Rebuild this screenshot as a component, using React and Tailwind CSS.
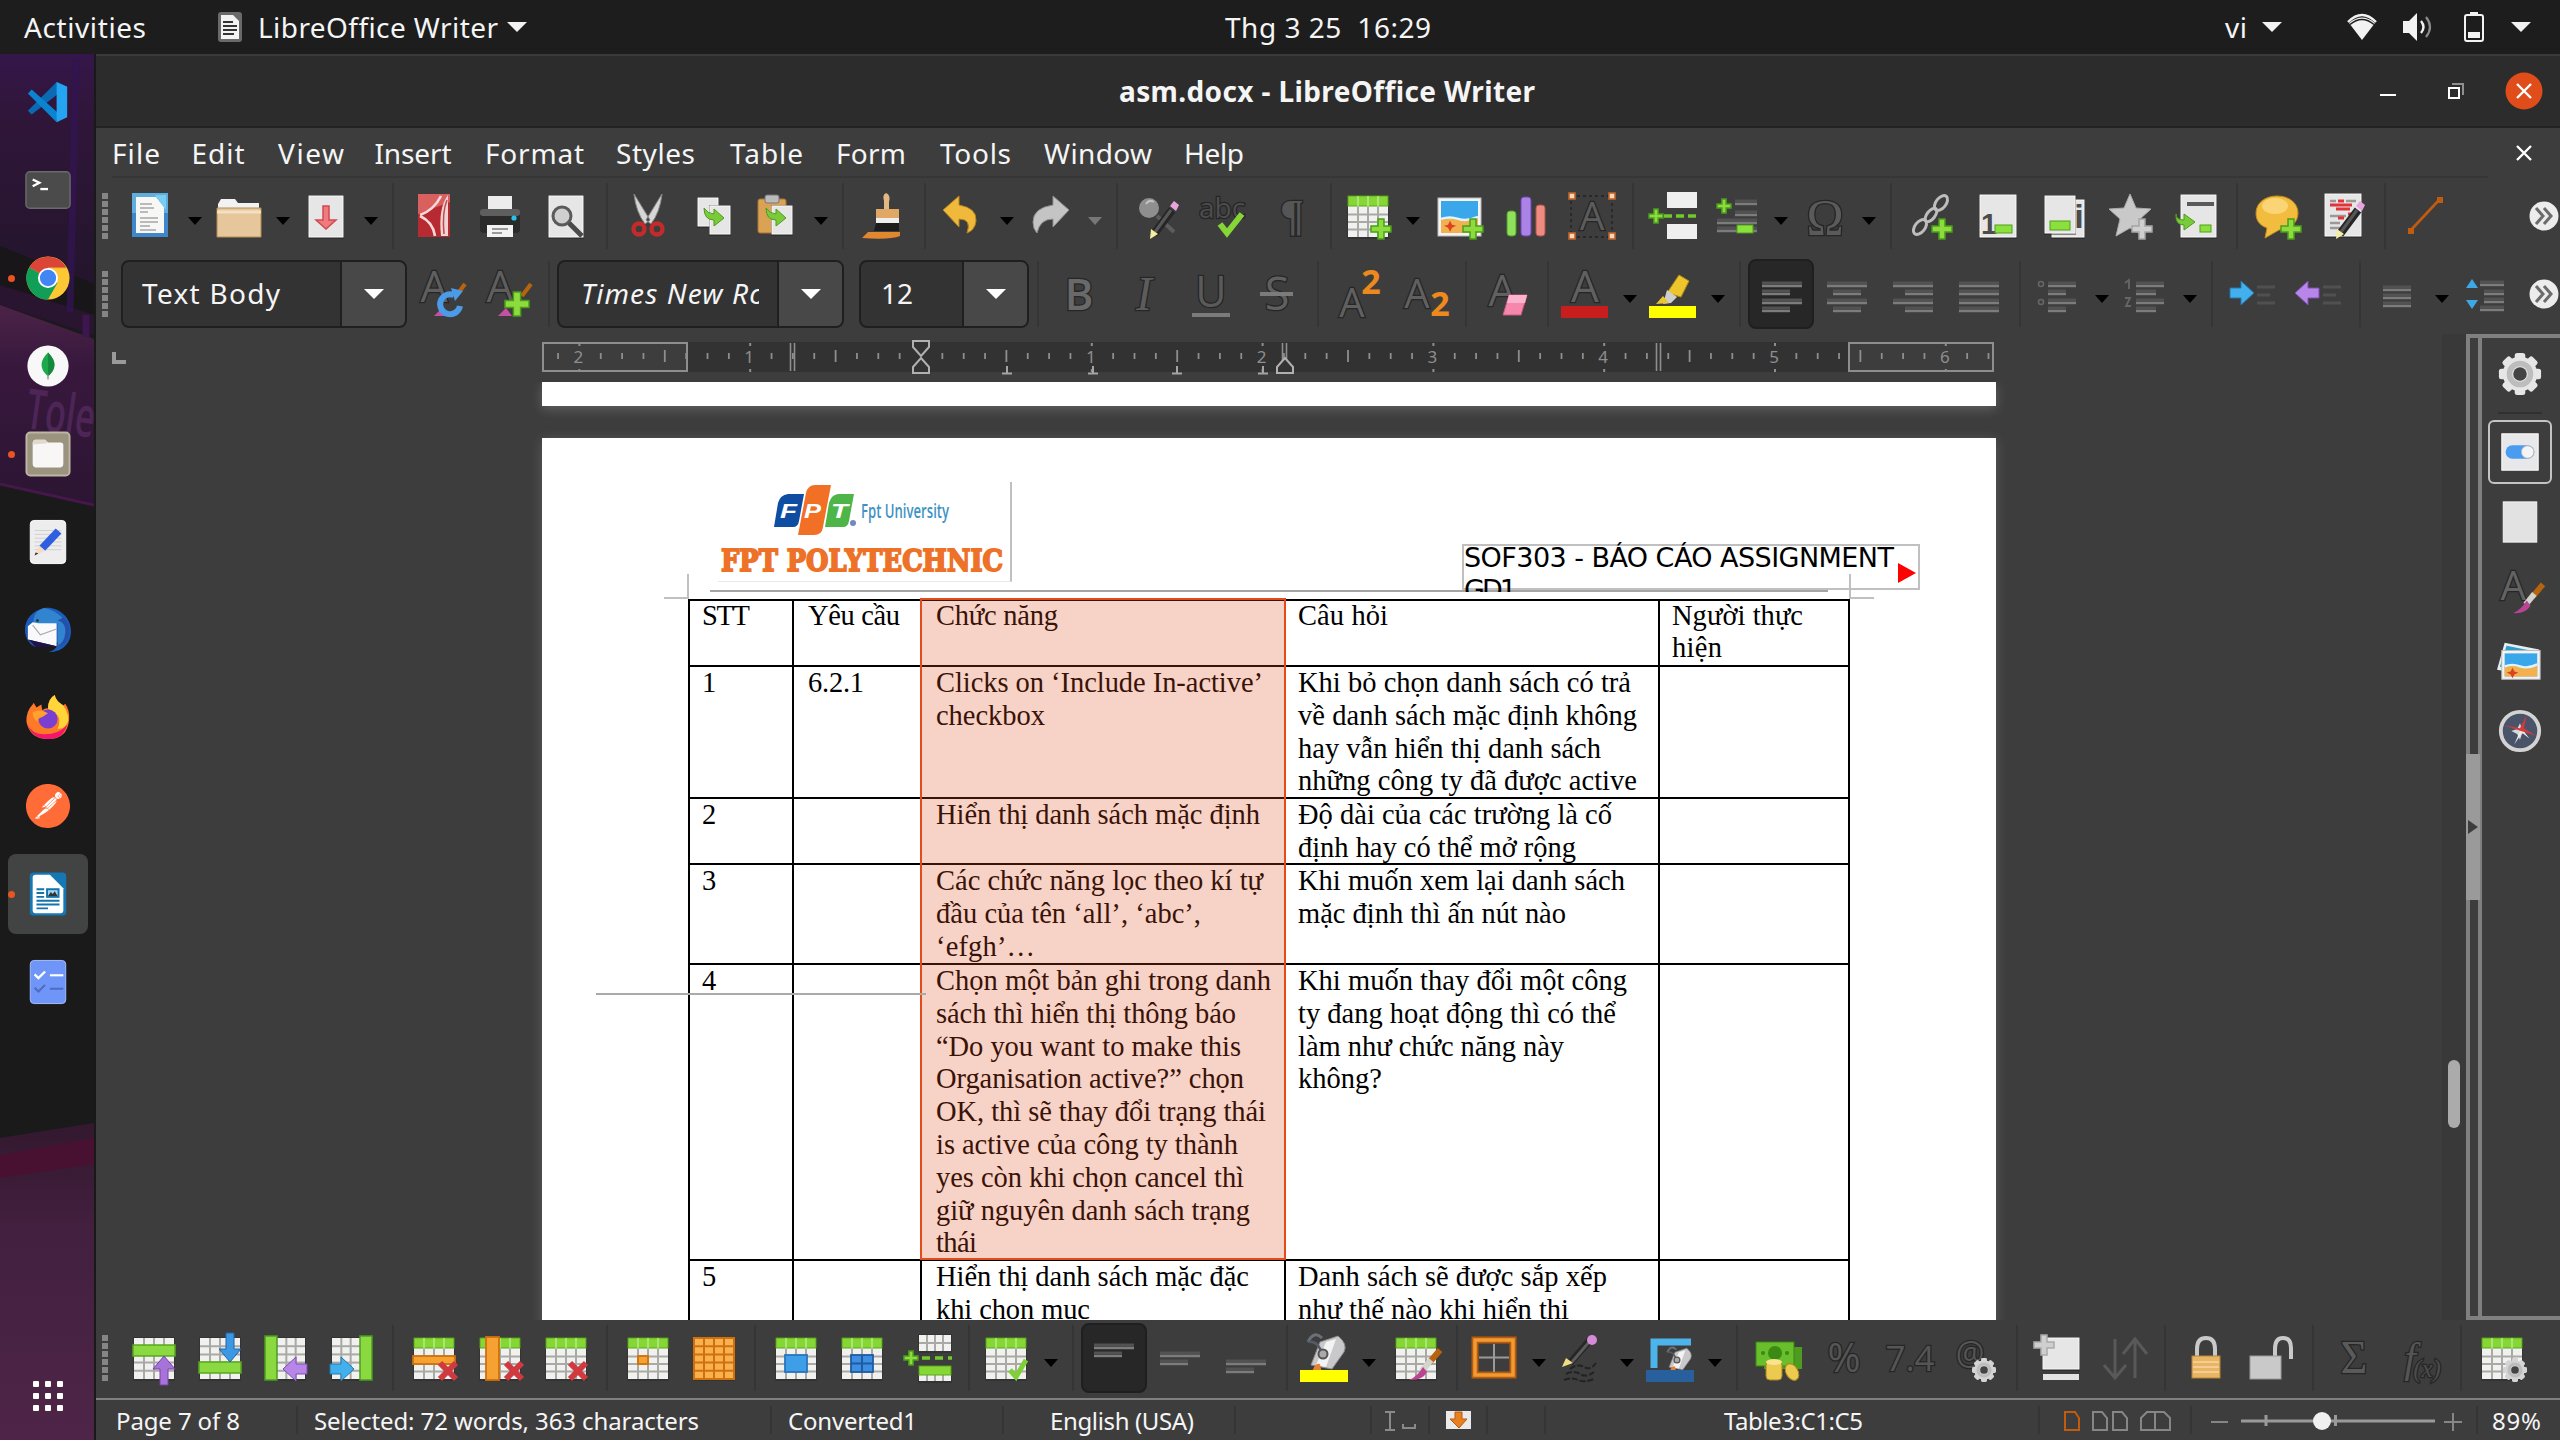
import React, { useLayoutEffect, useRef } from "react";
import { SiPostman } from "react-icons/si";

/* A line of text whose tracking is adjusted so that it spans the given width. */
function Fit({ w, children, className = "" }) {
  const ref = useRef(null);
  useLayoutEffect(() => {
    const el = ref.current;
    const inner = el.firstChild;
    inner.style.letterSpacing = "0px";
    const n = [...children].length;
    const natural = inner.getBoundingClientRect().width;
    if (n > 1) inner.style.letterSpacing = (w - natural) / (n - 1) + "px";
  }, [w, children]);
  return (
    <span ref={ref} className={"block whitespace-pre " + className} style={{ width: w }}>
      <span className="inline-block">{children}</span>
    </span>
  );
}

const Svg = ({ children, size = 48, w, h, vb = "0 0 48 48", className = "" }) => (
  <svg width={w || size} height={h || size} viewBox={vb} className={"block shrink-0 overflow-visible " + className}>
    {children}
  </svg>
);

/* ---------- icon parts ---------- */
const Plus = ({ x, y, s = 10, fill = "#8edb3e", stroke = "#4a9e1a" }) => (
  <path
    d={`M${x - s * 0.3} ${y - s}h${s * 0.6}v${s * 0.7}h${s * 0.7}v${s * 0.6}h${-s * 0.7}v${s * 0.7}h${-s * 0.6}v${-s * 0.7}h${-s * 0.7}v${-s * 0.6}h${s * 0.7}z`}
    fill={fill}
    stroke={stroke}
    strokeWidth="1.5"
  />
);
const Cross = ({ x, y, s = 8 }) => (
  <path d={`M${x - s} ${y - s}L${x + s} ${y + s}M${x + s} ${y - s}L${x - s} ${y + s}`} stroke="#cf3a41" strokeWidth="6" fill="none" />
);
const Grid = ({ x = 4, y = 4, w = 40, h = 41, cols = 4, rows = 5, head = true, fill = "#f1f1ef", line = "#a9a9a6" }) => {
  const top = head ? y + 11 : y;
  const rh = (y + h - top) / (head ? rows - 1 : rows);
  const lines = [];
  for (let i = 1; i < cols; i++) lines.push(<path key={"c" + i} d={`M${x + (w * i) / cols} ${top}V${y + h}`} />);
  for (let i = 1; i < (head ? rows - 1 : rows); i++) lines.push(<path key={"r" + i} d={`M${x} ${top + rh * i}H${x + w}`} />);
  return (
    <g>
      <rect x={x - 1} y={y - 1} width={w + 2} height={h + 3} fill="#2a2a2a" opacity=".5" />
      <rect x={x} y={y} width={w} height={h} fill={fill} />
      <g stroke={line} strokeWidth="2" fill="none">{lines}</g>
      {head && (
        <g>
          <rect x={x} y={y} width={w} height="10" fill="#86d636" stroke="#5aa61c" />
          <path d={`M${x + w / 4} ${y}v10M${x + w / 2} ${y}v10M${x + w * 0.75} ${y}v10`} stroke="#b7ec86" strokeWidth="1.5" />
        </g>
      )}
    </g>
  );
};
const Glyph = ({ t, x = 24, y = 38, size = 38, font = "Open Sans", style, weight = 500, fill = "#666" }) => (
  <text x={x} y={y} fontSize={size} fontFamily={font + ", sans-serif"} fontStyle={style} fontWeight={weight} textAnchor="middle" fill={fill} stroke="#262626" strokeWidth="2.6" paintOrder="stroke">
    {t}
  </text>
);
const Paper = ({ x = 6, y = 3, w = 36, h = 42 }) => (
  <g>
    <rect x={x - 1} y={y - 1} width={w + 2} height={h + 3} fill="#222" opacity=".5" />
    <rect x={x} y={y} width={w} height={h} fill="#e6e6e6" stroke="#f8f8f8" />
  </g>
);
const Lines = ({ rows, c = "#7c7c7c", sw = 3 }) => (
  <g>
    {rows.map(([x1, x2, y], i) => (
      <g key={i}>
        <path d={`M${x1} ${y - 2}H${x2}`} stroke="#525252" strokeWidth={sw} />
        <path d={`M${x1} ${y + 1}H${x2}`} stroke={c} strokeWidth="2.4" />
      </g>
    ))}
  </g>
);
const Pencil = () => (
  <g>
    <path d="M38 18L20 42" stroke="#262626" strokeWidth="8" />
    <path d="M37 18L21 40" stroke="#575757" strokeWidth="3" />
    <path d="M36 14l6 5 3-6-5-4z" fill="#e8a5dd" />
    <path d="M17 37l7 5-8 5z" fill="#f5eea0" />
  </g>
);
const Brush = ({ dx = 0, dy = 0 }) => (
  <g transform={`translate(${dx} ${dy})`}>
    <path d="M47 15L36 28" stroke="#b8640e" strokeWidth="6" />
    <path d="M38 25L29 36" stroke="#d4d4ce" strokeWidth="6" />
    <path d="M30 32l4 5q-5 9-18 8 8-3 14-13z" fill="#b84492" />
  </g>
);
const ArrowV = ({ x, y, up, c, s }) => (
  <path
    transform={`translate(${x} ${y}) scale(1 ${up ? -1 : 1})`}
    d="M-4-15h8V1h7L0 14-11 1h7z"
    fill={c}
    stroke={s}
  />
);
const ArrowH = ({ x, y, left, c, s }) => (
  <path transform={`translate(${x} ${y}) scale(${left ? -1 : 1} 1)`} d="M-12-5h11v-7L12 0-1 12V5h-11z" fill={c} stroke={s} />
);
const Gear = ({ x, y, r, fill = "#dedede" }) => (
  <g transform={`translate(${x} ${y})`}>
    {[0, 45, 90, 135].map((a) => (
      <rect key={a} x={-r * 0.25} y={-r} width={r * 0.5} height={r * 2} rx={r * 0.12} fill={fill} transform={`rotate(${a})`} />
    ))}
    <circle r={r * 0.82} fill={fill} />
    <circle r={r * 0.5} fill="none" stroke="#bdbdbd" strokeWidth={r * 0.26} />
    <circle r={r * 0.32} fill="#444" />
  </g>
);
const Pic = ({ x, y, w, h }) => (
  <g>
    <rect x={x} y={y} width={w} height={h} fill="#f4f4f4" stroke="#bbb" />
    <rect x={x + 3} y={y + 3} width={w - 6} height={h - 6} fill="#3aa7ea" />
    <path d={`M${x + 3} ${y + h * 0.55}q${w * 0.2}-3 ${w * 0.4} 0t${w - 6 - w * 0.4} -2V${y + h - 3}H${x + 3}z`} fill="#f2b04e" />
    <path d={`M${x + 3} ${y + h * 0.55}q${w * 0.2}-3 ${w * 0.4} 0t${w - 6 - w * 0.4} -2`} stroke="#dff4ff" strokeWidth="2.5" fill="none" />
    <path d={`M${x + w * 0.28} ${y + h * 0.6}l2 4 4 1-4 2-2 4-2-4-4-2 4-1z`} fill="#d9431d" />
  </g>
);
const PourCan = ({ dx = 0, dy = 0, k = 1 }) => (
  <g transform={`translate(${dx} ${dy}) scale(${k})`}>
    <path d="M8 8Q14-4 22 4" stroke="#6b6f78" strokeWidth="3" fill="none" />
    <path d="M20 8L38 2Q48 10 44 18L32 35 11 31z" fill="#c9c9cb" stroke="#8a8a8a" />
    <path d="M26 8L36 5 26 33 16 31z" fill="#f3f3f3" />
    <path d="M8 8Q18 6 22 20" stroke="#555b66" strokeWidth="2.5" fill="none" />
    <circle cx="23" cy="20" r="4.5" fill="#aaa" stroke="#555" strokeWidth="2" />
    <path d="M12 38q3-10 8-8 1 6 2 8z" fill="#e88230" />
  </g>
);

/* ---------- toolbar icons ---------- */
const I = {
  newdoc: (
    <>
      <rect x="6" y="1" width="36" height="44" fill="#3f86cb" />
      <rect x="6" y="1" width="36" height="20" fill="#6fbfe6" opacity=".7" />
      <path d="M10 5h20l8 10v26H10z" fill="#f7f7f5" />
      <path d="M29 3h11v15z" fill="#79cdf0" />
      <path d="M14 12h12M14 16h14M14 20h8M14 26h18M14 30h18M14 34h10M14 38h16" stroke="#a7a7a7" strokeWidth="1.6" />
    </>
  ),
  open: (
    <>
      <path d="M4 44V12l3-5h14l3 4h21v33z" fill="#f2f2f2" />
      <path d="M3 16h44v29H3z" fill="#e6c79c" stroke="#b48c55" />
      <path d="M3 20h44" stroke="#f3e0c4" strokeWidth="3" />
    </>
  ),
  save: (
    <>
      <Paper x={7} y={4} w={34} h={41} />
      <path d="M21 14h6v14h7L24 37 14 28h7z" fill="#ef7b7f" stroke="#cf4a50" strokeWidth="1.5" />
    </>
  ),
  pdf: (
    <>
      <rect x="8" y="2" width="32" height="43" fill="#b82a31" />
      <path d="M8 2h32v8L8 22z" fill="#d9605f" />
      <path d="M10 23Q24 18 31 4M10 24Q23 30 25 44" stroke="#f6dada" strokeWidth="2.6" fill="none" />
      <path d="M38 3Q28 16 31 44h7z" fill="#f1d3d3" />
      <path d="M37 8Q32 20 34 42" stroke="#c4484b" strokeWidth="1.500" fill="none" />
    </>
  ),
  print: (
    <>
      <rect x="12" y="4" width="24" height="16" fill="#ececec" />
      <rect x="4" y="17" width="40" height="24" rx="4" fill="#2a2a2a" />
      <rect x="4" y="17" width="40" height="7" rx="3" fill="#5e5e5e" />
      <rect x="11" y="33" width="26" height="12" fill="#f2f2f2" />
      <path d="M16 37h16M16 41h10" stroke="#999" strokeWidth="2" />
      <circle cx="38" cy="26" r="2.6" fill="#27c3ee" />
    </>
  ),
  preview: (
    <>
      <Paper x={7} y={4} w={34} h={41} />
      <circle cx="20" cy="24" r="9" fill="#cfcfcf" stroke="#5b5b5b" strokeWidth="3" />
      <path d="M27 31L40 44" stroke="#4b4b4b" strokeWidth="5" />
    </>
  ),
  cut: (
    <>
      <path d="M10 2l16 26-5 4Q12 20 10 2zM38 2L22 28l5 4Q36 20 38 2z" fill="#d6d6d6" stroke="#888" />
      <circle cx="15" cy="37" r="5.5" fill="none" stroke="#c32b2b" strokeWidth="4.4" />
      <circle cx="33" cy="37" r="5.5" fill="none" stroke="#c32b2b" strokeWidth="4.4" />
    </>
  ),
  copy: (
    <>
      <Paper x={8} y={6} w={20} h={28} />
      <Paper x={20} y={14} w={20} h={28} />
      <path d="M14 16q0 12 10 12v6l10-8-10-9v5q-6 0-10-6z" fill="#79cb3a" stroke="#4f9a1f" />
    </>
  ),
  paste: (
    <>
      <rect x="6" y="7" width="28" height="34" rx="2" fill="#d9a254" stroke="#a97630" />
      <rect x="13" y="3" width="14" height="8" rx="2" fill="#bbb" stroke="#777" />
      <Paper x={20} y={14} w={20} h={28} />
      <path d="M14 16q0 12 10 12v6l10-8-10-9v5q-6 0-10-6z" fill="#79cb3a" stroke="#4f9a1f" />
    </>
  ),
  clone: (
    <>
      <path d="M26 1q5 2 3 9v8h-5V9q-2-6 2-8z" fill="#e2b981" />
      <rect x="16" y="17" width="23" height="10" fill="#dfa865" />
      <rect x="16" y="26" width="23" height="5" fill="#eee" />
      <path d="M16 31h23v8H14z" fill="#1c1c1c" />
      <path d="M2 46l6-6h32v4q-10 4-38 2z" fill="#e18730" />
    </>
  ),
  undo: <path d="M5 18L21 4v9q18 3 17 16-1 9-9 12 5-14-8-14v8z" fill="#f0b93c" stroke="#b5851d" />,
  redo: <path d="M43 18L27 4v9Q7 16 7 30q0 7 4 11 3-14 16-14v8z" fill="#c4c4c4" stroke="#8f8f8f" />,
  find: (
    <>
      <circle cx="15" cy="16" r="10" fill="#8f8f8f" />
      <path d="M12 12q3-5 8-2" stroke="#c0c0c0" strokeWidth="2" fill="none" />
      <path d="M23 24L40 40" stroke="#5d5d5d" strokeWidth="4" />
      <Pencil />
    </>
  ),
  spell: (
    <>
      <Glyph t="abc" x={22} y={26} size={28} fill="#4c4c4c" />
      <path d="M20 32l7 9L42 22" stroke="#86d636" strokeWidth="6" fill="none" />
    </>
  ),
  pilcrow: <Glyph t="¶" x={26} y={38} size={44} fill="#555" font="Liberation Serif" weight="bold" />,
  table: (
    <>
      <Grid />
      <Plus x={37} y={37} />
    </>
  ),
  image: (
    <>
      <Pic x={2} y={6} w={43} h={38} />
      <Plus x={37} y={37} />
    </>
  ),
  chart: (
    <>
      <rect x="5" y="19" width="9" height="25" rx="3" fill="#8fe05a" stroke="#519b28" />
      <rect x="19" y="5" width="10" height="39" rx="3" fill="#ab83e6" stroke="#6f47b5" />
      <rect x="34" y="13" width="9" height="31" rx="3" fill="#ee8b80" stroke="#b2524a" />
    </>
  ),
  textbox: (
    <>
      <rect x="3" y="4" width="41" height="41" fill="none" stroke="#222" strokeWidth="1.4" strokeDasharray="3 3" />
      {[[1, 1], [41, 1], [1, 41], [41, 41]].map(([x, y]) => (
        <rect key={x + "-" + y} x={x} y={y} width="6" height="6" fill="#f8d9c0" stroke="#c4622a" strokeWidth="1.6" />
      ))}
      <Glyph t="A" x={24} y={38} size={39} fill="#5c5c5c" />
    </>
  ),
  pagebreak: (
    <>
      <rect x="17" y="0" width="30" height="16" fill="#efefef" />
      <rect x="17" y="32" width="30" height="15" fill="#efefef" />
      <Plus x={6} y={24} s={7} />
      <path d="M14 24h34" stroke="#72c92c" strokeWidth="3.4" strokeDasharray="8 4" />
    </>
  ),
  field: (
    <>
      <Plus x={12} y={14} s={7} />
      <Lines rows={[[23, 45, 11], [23, 45, 22], [5, 45, 30], [5, 45, 38]]} />
      <rect x="25" y="33" width="16" height="8" fill="#8be03e" stroke="#4e9f1b" />
    </>
  ),
  omega: <Glyph t="Ω" x={25} y={42} size={50} fill="#5a5a5a" font="Liberation Serif" />,
  link: (
    <>
      <g fill="none" stroke="#bdbdbd" strokeWidth="3">
        <ellipse cx="33" cy="11" rx="5" ry="8.5" transform="rotate(38 33 11)" />
        <ellipse cx="23" cy="23" rx="4" ry="8" transform="rotate(38 23 23)" />
        <ellipse cx="12" cy="35" rx="5" ry="8.5" transform="rotate(38 12 35)" />
      </g>
      <Plus x={34} y={37} />
    </>
  ),
  footnote: (
    <>
      <Paper />
      <text x="15" y="42" fontSize="29" fontWeight="bold" fontFamily="Liberation Sans, sans-serif" textAnchor="middle" fill="#4c4c4c">1</text>
      <rect x="21" y="33" width="17" height="8" fill="#8be03e" stroke="#4e9f1b" />
    </>
  ),
  endnote: (
    <>
      <Paper x={12} y={8} w={32} h={37} />
      <Paper x={5} y={4} w={30} h={37} />
      <text x="39" y="36" fontSize="34" fontWeight="bold" fontFamily="Liberation Sans, sans-serif" textAnchor="middle" fill="#4c4c4c">i</text>
      <rect x="10" y="29" width="20" height="9" fill="#8be03e" stroke="#4e9f1b" />
    </>
  ),
  bookmark: (
    <>
      <path d="M24 2l6 14 15 1-11 10 4 17-14-8-14 8 4-17L3 17l15-1z" fill="#c9c9c9" stroke="#ababab" />
      <Plus x={36} y={37} fill="#cfcfcf" stroke="#a5a5a5" />
    </>
  ),
  crossref: (
    <>
      <Paper x={9} y={3} w={35} h={42} />
      <path d="M15 12h27" stroke="#5a5a5a" strokeWidth="4" />
      <path d="M4 22q0 6 8 6v-6l11 8-11 8v-5Q3 33 4 22z" fill="#79cb3a" stroke="#4f9a1f" />
      <rect x="28" y="33" width="11" height="7" fill="#8be03e" stroke="#4e9f1b" />
    </>
  ),
  comment: (
    <>
      <path d="M23 4c12 0 21 7 21 17s-8 16-19 17L11 46l2-10C5 33 2 28 2 21 2 11 11 4 23 4z" fill="#f2bd3f" stroke="#c48b1b" />
      <ellipse cx="21" cy="14" rx="13" ry="8" fill="#ffe08d" opacity=".7" />
      <Plus x={37} y={37} />
    </>
  ),
  track: (
    <>
      <Paper x={5} y={2} />
      <path d="M10 9h6M26 9h10M10 24h16M10 31h10M10 36h10" stroke="#999" strokeWidth="2.4" />
      <path d="M18 9h6M10 13h22M16 17h14M28 22h6M18 26h6" stroke="#e0343a" strokeWidth="3" />
      <Pencil />
    </>
  ),
  line: (
    <>
      <path d="M9 38L37 8" stroke="#c15b10" strokeWidth="2.6" />
      <rect x="6" y="36" width="6" height="6" fill="#c15b10" />
      <rect x="35" y="5" width="6" height="6" fill="#c15b10" />
    </>
  ),
  /* formatting */
  updStyle: (
    <>
      <Glyph t="A" x={16} y={32} size={43} fill="#5e5e5e" />
      <path d="M47 14L38 26" stroke="#b8640e" strokeWidth="4" />
      <path d="M16 46l8-8 4 8z" fill="#c651a4" />
      <path d="M42 36a10 10 0 1 1-6-11" fill="none" stroke="#4c9be8" strokeWidth="6" />
      <path d="M33 18l12 3-8 10z" fill="#4c9be8" />
    </>
  ),
  newStyle: (
    <>
      <Glyph t="A" x={16} y={32} size={43} fill="#5e5e5e" />
      <path d="M47 14L38 26" stroke="#b8640e" strokeWidth="4" />
      <path d="M14 46l8-8 6 8z" fill="#c651a4" />
      <Plus x={33} y={34} s={12} />
    </>
  ),
  bold: <Glyph t="B" x={24} y={40} size={44} fill="#696969" weight="600" />,
  italic: <Glyph t="I" x={23} y={40} size={48} fill="#5c5c5c" font="Liberation Serif" style="italic" />,
  underline: (
    <>
      <Glyph t="U" x={24} y={37} size={43} fill="#5a5a5a" />
      <path d="M5 45h38" stroke="#7b7b7b" strokeWidth="4" />
    </>
  ),
  strike: (
    <>
      <Glyph t="S" x={24} y={40} size={45} fill="#606060" />
      <path d="M7 24h33" stroke="#7b7b7b" strokeWidth="4" />
    </>
  ),
  sup: (
    <>
      <Glyph t="A" x={17} y={47} size={40} fill="#606060" />
      <text x="36" y="24" fontSize="34" fontWeight="bold" fontFamily="Open Sans, sans-serif" textAnchor="middle" fill="#ee8a1d">2</text>
    </>
  ),
  sub: (
    <>
      <Glyph t="A" x={16} y={38} size={40} fill="#606060" />
      <text x="39" y="46" fontSize="34" fontWeight="bold" fontFamily="Open Sans, sans-serif" textAnchor="middle" fill="#ee8a1d">2</text>
    </>
  ),
  clear: (
    <>
      <Glyph t="A" x={19} y={36} size={43} fill="#606060" />
      <path d="M26 25h18l-6 20H20z" fill="#f587ad" stroke="#c75a80" />
      <path d="M26 25h18l-2 8H24z" fill="#fbb2cc" />
    </>
  ),
  fontColor: (
    <>
      <Glyph t="A" x={24} y={32} size={44} fill="#606060" />
      <rect x="0" y="36" width="47" height="12" fill="#c81d1d" />
    </>
  ),
  highlight: (
    <>
      <path d="M30 5l10 6-8 16-14-4z" fill="#edc52d" stroke="#b28a10" />
      <path d="M18 20l10 7-6 6-8 1z" fill="#cfcfcf" />
      <path d="M7 34l7-8 6 7z" fill="#edc52d" />
      <rect x="0" y="36" width="47" height="12" fill="#ffff00" />
    </>
  ),
  alL: <Lines rows={[[5, 45, 15], [5, 33, 23], [5, 45, 32], [5, 33, 40]]} />,
  alC: <Lines rows={[[4, 44, 15], [10, 38, 23], [4, 44, 32], [10, 38, 40]]} />,
  alR: <Lines rows={[[4, 44, 15], [16, 44, 23], [4, 44, 32], [16, 44, 40]]} />,
  alJ: <Lines rows={[[4, 44, 15], [4, 44, 23], [4, 44, 32], [4, 44, 40]]} />,
  bullets: (
    <>
      <Lines rows={[[15, 43, 15], [15, 33, 23], [15, 43, 32], [15, 33, 40]]} />
      <circle cx="8" cy="14" r="2.5" fill="none" stroke="#666" strokeWidth="1.6" />
      <circle cx="8" cy="32" r="2.5" fill="none" stroke="#666" strokeWidth="1.6" />
    </>
  ),
  numbers: (
    <>
      <Lines rows={[[15, 43, 15], [15, 35, 23], [15, 43, 32], [15, 35, 40]]} />
      <path d="M4 13l4-3v9M4 28h5l-4 8h5" fill="none" stroke="#666" strokeWidth="1.8" />
    </>
  ),
  indent: (
    <>
      <ArrowH x={13} y={23} c="#43b0ee" s="#2277ad" />
      <path d="M28 17h18M28 25h13M28 33h18" stroke="#505050" strokeWidth="3" />
    </>
  ),
  outdent: (
    <>
      <ArrowH x={12} y={23} left c="#b786e8" s="#7e4fb5" />
      <path d="M28 17h18M28 25h13M28 33h18" stroke="#505050" strokeWidth="3" />
    </>
  ),
  lineSp: <Lines rows={[[10, 38, 19], [10, 38, 27], [10, 38, 35]]} />,
  paraSp: (
    <>
      <path d="M1 18l6-9 6 9zM1 30l6 9 6-9z" fill="#3ea8e6" />
      <Lines rows={[[15, 39, 14], [19, 39, 23], [19, 39, 31], [15, 39, 39]]} />
    </>
  ),
  /* table toolbar */
  rowAbove: (<><Grid head={false} /><rect x="3" y="11" width="42" height="11" fill="#8bd940" stroke="#5aa61c" strokeWidth="1.5" /><ArrowV x={34} y={36} up c="#a873d8" s="#7642ad" /></>),
  rowBelow: (<><Grid head={false} /><rect x="3" y="28" width="42" height="11" fill="#8bd940" stroke="#5aa61c" strokeWidth="1.5" /><ArrowV x={34} y={14} c="#3d98e3" s="#2164a8" /></>),
  colBefore: (<><Grid head={false} x={15} w={28} cols={3} /><rect x="3" y="2" width="12" height="44" fill="#8bd940" stroke="#4f9a1f" strokeWidth="1.5" /><ArrowH x={33} y={35} left c="#b786e8" s="#7e4fb5" /></>),
  colAfter: (<><Grid head={false} x={4} w={28} cols={3} /><rect x="32" y="2" width="12" height="44" fill="#8bd940" stroke="#4f9a1f" strokeWidth="1.5" /><ArrowH x={14} y={35} c="#43b0ee" s="#2277ad" /></>),
  delRow: (<><Grid /><rect x="3" y="22" width="42" height="8" fill="#f5a233" stroke="#d0700c" strokeWidth="1.8" /><Cross x={38} y={37} /></>),
  delCol: (<><Grid /><rect x="10" y="3" width="13" height="43" fill="#f5a233" stroke="#d0700c" strokeWidth="1.8" /><Cross x={38} y={37} /></>),
  delTab: (<><Grid /><Cross x={36} y={37} /></>),
  selCell: (<><Grid /><rect x="14" y="22" width="10" height="8" fill="#f5a233" stroke="#d0700c" strokeWidth="1.8" /></>),
  selTab: (<><Grid head={false} fill="#f9b14f" line="#d0700c" /><rect x="4" y="4" width="40" height="41" fill="none" stroke="#d0700c" strokeWidth="2" /></>),
  merge: (<><Grid /><rect x="13" y="21" width="22" height="17" fill="#3f9ee8" stroke="#2a74bd" strokeWidth="1.8" /></>),
  split: (<><Grid /><rect x="13" y="21" width="22" height="17" fill="#3f8fe0" stroke="#1d5ba3" strokeWidth="1.8" /><path d="M24 21v17M13 29.500h22" stroke="#1d5ba3" strokeWidth="2" /></>),
  splitTab: (
    <>
      <Grid head={false} x={15} y={1} w={32} h={16} cols={4} rows={2} />
      <Grid head={false} x={15} y={32} w={32} h={15} cols={4} rows={2} />
      <rect x="15" y="32" width="32" height="9" fill="#86d636" stroke="#5aa61c" />
      <Plus x={7} y={24} s={7} />
      <path d="M18 24h30" stroke="#72c92c" strokeWidth="3.4" strokeDasharray="8 5" />
    </>
  ),
  autofit: (<><Grid /><path d="M28 36l6 7L44 26" stroke="#7fd036" strokeWidth="5" fill="none" /></>),
  vTop: <Lines rows={[[4, 44, 13], [4, 32, 21]]} />,
  vMid: <Lines rows={[[4, 44, 21], [4, 32, 29]]} />,
  vBot: <Lines rows={[[4, 44, 29], [4, 32, 37]]} />,
  cellBg: (<><PourCan /><rect x="0" y="36" width="48" height="12" fill="#ffff00" /></>),
  tabStyle: (<><Grid /><Brush dx={1} dy={1} /></>),
  borders: (<><rect x="5" y="6" width="38" height="35" fill="none" stroke="#b95b0c" strokeWidth="7" /><rect x="5" y="6" width="38" height="35" fill="none" stroke="#f09a33" strokeWidth="3.5" /><path d="M24 10v28M9 23.500h30" stroke="#9a9a9a" strokeWidth="2" /></>),
  bStyle: (<><path d="M33 5L12 29" stroke="#262626" strokeWidth="7" /><path d="M32 7L14 28" stroke="#5b5b5b" strokeWidth="3" /><circle cx="34" cy="6" r="5" fill="#d68bd6" /><path d="M4 33l4-9 7 5z" fill="#f0df80" /><path d="M12 35q8-6 14-2t12-4M8 40q8-4 14 0t14-2M6 46q8-3 14 0t16-1" stroke="#222" strokeWidth="2" fill="none" strokeDasharray="6 2" /></>),
  bColor: (<><path d="M8 34V8h37" fill="none" stroke="#4cb4ea" strokeWidth="7" /><PourCan dx={16} dy={13} k={0.65} /><rect x="0" y="36" width="48" height="12" fill="#285f9d" /></>),
  currency: (
    <>
      <rect x="10" y="13" width="38" height="22" fill="#4d9c20" />
      <rect x="2" y="8" width="38" height="24" fill="#69bf2b" stroke="#3d8514" />
      <circle cx="21" cy="19" r="7" fill="#3b8a14" />
      <circle cx="9" cy="19" r="2" fill="#3b8a14" /><circle cx="33" cy="19" r="2" fill="#3b8a14" />
      <rect x="12" y="27" width="16" height="19" rx="4" fill="#ecc94f" stroke="#a88620" />
      <ellipse cx="20" cy="28" rx="8" ry="3" fill="#f8e48d" />
      <ellipse cx="38" cy="38" rx="6" ry="9" fill="#ecc94f" stroke="#a88620" transform="rotate(-30 38 38)" />
    </>
  ),
  percent: <Glyph t="%" x={24} y={38} size={40} fill="#555" />,
  decimal: <Glyph t="7.4" x={24} y={37} size={35} fill="#555" />,
  numfmt: (<><Glyph t="@" x={18} y={31} size={32} fill="#555" /><Gear x={32} y={36} r={12} fill="#d4d4d4" /></>),
  caption: (<><Paper x={9} y={4} w={36} h={31} /><rect x="9" y="40" width="36" height="6" fill="#e3e3e3" /><Plus x={10} y={11} s={10} fill="#cfcfcf" stroke="#aaa" /></>),
  sort: <path d="M15 5v38M4 31l11 13 11-13M35 44V6M23 20L35 5l12 15" fill="none" stroke="#595959" strokeWidth="3" />,
  lock: (<><path d="M15 24V15q0-11 9-11t9 11v9" fill="none" stroke="#c9c9c9" strokeWidth="4" /><rect x="10" y="22" width="28" height="22" fill="#e8b565" stroke="#b98435" /><path d="M11 28h26M11 33h26M11 38h26" stroke="#f3cd92" strokeWidth="2" /></>),
  unlock: (<><path d="M27 24V15q0-11 8-11t8 10v11" fill="none" stroke="#c9c9c9" strokeWidth="4" /><rect x="2" y="22" width="31" height="23" fill="#c9c9c9" stroke="#9b9b9b" /></>),
  sum: <Glyph t="Σ" x={24} y={39} size={46} fill="#5a5a5a" font="Liberation Serif" />,
  fx: (<><Glyph t="f" x={14} y={38} size={42} fill="#555" font="Liberation Serif" style="italic" /><Glyph t="(x)" x={31} y={43} size={25} fill="#4c4c4c" font="Liberation Serif" style="italic" /></>),
  props: (<><Grid /><Gear x={37} y={36} r={12} fill="#d4d4d4" /></>),
};

/* ---------- toolbar building blocks ---------- */
const Caret = ({ c = "#000" }) => (
  <svg width="14" height="8" viewBox="0 0 14 8" className="block"><path d="M0 0h14L7 8z" fill={c} /></svg>
);
const Btn = ({ i, on }) => (
  <div className={"flex w-[66px] shrink-0 items-center justify-center " + (on ? "h-[70px] rounded-lg border-2 border-[#1f1f1f] bg-[#272727]" : "")}>
    <Svg>{I[i]}</Svg>
  </div>
);
const Drop = ({ i, dim }) => (
  <div className="flex w-[88px] shrink-0 items-center pl-[5px]">
    <Svg>{I[i]}</Svg>
    <div className="ml-[14px] mt-[9px]"><Caret c={dim ? "#777" : "#000"} /></div>
  </div>
);
const Sep = () => <div className="mx-[7px] h-[66px] w-[2px] shrink-0 bg-[#353535]" />;
const Grip = () => (
  <div className="ml-[6px] mr-[13px] flex w-[6px] shrink-0 flex-col gap-[2px]">
    {[0, 1, 2, 3, 4, 5].map((k) => <div key={k} className="size-[6px] bg-[#858585]" />)}
  </div>
);
const More = () => (
  <Svg size={32} vb="0 0 32 32" className="absolute right-[1px]">
    <circle cx="17" cy="16" r="14.500" fill="#ececec" />
    <path d="M9 8l7 8-7 8M17 8l7 8-7 8" fill="none" stroke="#6b6b6b" strokeWidth="3" />
  </Svg>
);
/* Items: plain name = button, trailing "+" = split button, "-" = disabled split, "|" = separator, leading "*" = pressed. */
const Bar = ({ items }) =>
  items.split(" ").map((t, k) => {
    if (t === "|") return <Sep key={k} />;
    if (t.endsWith("+")) return <Drop key={k} i={t.slice(0, -1)} />;
    if (t.endsWith("-")) return <Drop key={k} i={t.slice(0, -1)} dim />;
    if (t.startsWith("*")) return <Btn key={k} i={t.slice(1)} on />;
    return <Btn key={k} i={t} />;
  });
const Combo = ({ text, tw, w, left, italic, clip }) => (
  <div className="flex h-[68px] shrink-0 overflow-hidden rounded-lg border-2 border-[#1f1f1f] bg-[#333]" style={{ width: w }}>
    <div className="flex grow items-center border-r-2 border-[#1f1f1f]" style={{ paddingLeft: left }}>
      <div className={"pb-[3px] leading-[44px] " + (italic ? "overflow-hidden italic" : "")} style={{ width: clip || "auto" }}>
        <Fit w={tw}>{text}</Fit>
      </div>
    </div>
    <div className="flex w-[63px] shrink-0 items-center justify-center bg-[#484848]">
      <svg width="20" height="10" viewBox="0 0 20 10"><path d="M0 0h20L10 10z" fill="#fff" /></svg>
    </div>
  </div>
);

/* ---------- dock ---------- */
const dock = [
  { k: "vscode", el: (<><path d="M3 33l4 4L44 8 33 3z" fill="#0a6ab3" /><path d="M3 15l4-4 27 24-1 10z" fill="#0a84d0" /><path d="M33 3l11 5v32l-11 5z" fill="#25a4f1" /></>) },
  { k: "terminal", el: (<><rect x="1" y="5" width="46" height="38" rx="4" fill="#4b4b4b" stroke="#6a6a6a" strokeWidth="1.5" /><path d="M8 13l7 3.500-7 3.500" fill="none" stroke="#fff" strokeWidth="2.4" /><path d="M16 23h8" stroke="#fff" strokeWidth="2.4" /></>) },
  { k: "chrome", dot: true, el: (<><circle cx="24" cy="24" r="22.500" fill="#fcc934" /><path d="M24 24L4.500 12.700A22.500 22.500 0 0 0 24 46.500L34 29z" fill="#119f58" /><path d="M24 24L4.500 12.700A22.500 22.500 0 0 1 43.500 13.500H24z" fill="#db4437" /><path d="M24 13.500h19.500" stroke="#e2b52c" /><circle cx="24" cy="24" r="10.500" fill="#fff" /><circle cx="24" cy="24" r="8.500" fill="#4285f4" /></>) },
  { k: "mongo", el: (<><circle cx="24" cy="24" r="21.500" fill="#f8f8f8" /><path d="M24 10c9 9 9 17 0 25-9-8-9-16 0-25z" fill="#1ba94c" /><path d="M24 10c9 9 9 17 0 25z" fill="#158a3e" /><path d="M24 33v5" stroke="#999" strokeWidth="1.5" /></>) },
  { k: "files", dot: true, el: (<><rect x="1.500" y="1.500" width="45" height="45" rx="4" fill="#9b937e" stroke="#bdb6a4" strokeWidth="2" /><path d="M8 13q0-4 3-4h10l3 3h13q3 0 3 3v19q0 4-3 4H11q-3 0-3-4z" fill="#f8f7f6" /><path d="M8 14q0-5 3-5h10l3 3-3 1z" fill="#e0dace" /></>) },
  { k: "editor", el: (<><rect x="5.500" y="1.500" width="37" height="45" rx="4" fill="#ededed" stroke="#fff" /><path d="M10 12h28M10 16h28M10 20h28M10 24h28M10 28h28M10 32h28" stroke="#cfcfcf" strokeWidth="1" /><path d="M15 28L32 10l6 5-17 18z" fill="#2f5fe0" /><path d="M15 28l6 5-11 5z" fill="#f5dcc3" /><path d="M10 38l1-3 3 1z" fill="#333" /></>) },
  { k: "thunderbird", el: (<><path d="M20 1C34-1 48 10 48 25c0 12-8 22-23 22 6-2 9-5 9-10L6 28C4 34 8 40 12 42 3 39 0 30 0 24 0 12 8 4 20 1z" fill="#1c5dbb" /><path d="M20 1c9 2 20 7 26 20-2 9-4 14-12 19V17L9 18C8 9 12 3 20 1z" fill="#3084d0" /><path d="M34 14c10 2 11 15 2 28 12-6 14-22 4-31z" fill="#254fa8" /><path d="M3 20l5-4 6 1 19 0v24L3 34z" fill="#f9f9fb" /><path d="M8 19l8 10 17-6" fill="none" stroke="#aaa" strokeWidth="1.2" /><path d="M3 34l30 7-20 1z" fill="#20114f" /><circle cx="13" cy="14" r="1.300" fill="#222" /></>) },
  { k: "firefox", el: (<><path d="M9 8l3 5 5-3 1 6q4-3 6-2 0-10 7-14 1 6 9 11l2-2q5 7 4 17Q44 46 24 46 5 46 1.500 28 1 17 8 10z" fill="#ff7a26" /><path d="M31 0q1 6 9 11 6 9 5 16-3 9-11 8 4-8 0-14-5-5-10-7 0-10 7-14z" fill="#ffd53a" /><path d="M2 30q5 11 18 11 16 0 24-10-4 15-20 15T2 30z" fill="#f5156c" /><circle cx="24" cy="25" r="10" fill="#7a3fd0" /><path d="M8 18q8-4 16 1l-6 4q-5 1-5 5-5-4-5-10z" fill="#ffa22e" /></>) },
  { k: "postman", el: (<><circle cx="24" cy="24" r="21" fill="#fff" /><g transform="translate(1 1)"><SiPostman size={46} color="#ff6c37" /></g></>) },
  { k: "writer", dot: true, on: true, el: (<><rect x="5" y="1.500" width="38" height="45" rx="4" fill="#1578b4" /><path d="M8 7q0-3 3-3h15l14 14v23q0 3-3 3H11q-3 0-3-3z" fill="#fff" /><path d="M12 19h8M12 23h8M12 27h8M12 31h24M12 35h24M12 39h12" stroke="#1273ad" strokeWidth="2" /><rect x="22" y="18" width="14" height="10" fill="#1273ad" /><rect x="24" y="20" width="10" height="6" fill="#9fd3f3" /><path d="M24 26l3-4 2 2 2-3 3 5z" fill="#333" /></>) },
  { k: "todo", el: (<><rect x="5.500" y="1.500" width="37" height="45" rx="4" fill="#6f95f8" stroke="#a8c0ff" /><path d="M10 16l4 4 7-7" fill="none" stroke="#fff" strokeWidth="2.400" /><path d="M26 17h14" stroke="#fff" strokeWidth="2.200" /><path d="M10 30l4 4 7-7M26 31h14" fill="none" stroke="#4e6cc0" strokeWidth="2.200" /></>) },
];

function Dock() {
  return (
    <div className="relative w-[96px] shrink-0 overflow-hidden border-r-2 border-[#191919] bg-[#1a1a1a]">
      <svg className="absolute inset-0" width="94" height="1386" viewBox="0 54 94 1386">
        <defs>
          <linearGradient id="wa" x1="0" y1="0" x2="0" y2="1">
            <stop offset="0" stopColor="#35164a" /><stop offset=".25" stopColor="#30163a" /><stop offset="1" stopColor="#23152c" />
          </linearGradient>
          <linearGradient id="wb" x1="0" y1="0" x2="0" y2="1">
            <stop offset="0" stopColor="#4c2348" /><stop offset=".3" stopColor="#38183d" /><stop offset="1" stopColor="#2c1533" />
          </linearGradient>
          <linearGradient id="wc" x1="0" y1="0" x2="0" y2="1">
            <stop offset="0" stopColor="#33182f" /><stop offset=".35" stopColor="#43203f" /><stop offset="1" stopColor="#4e2548" />
          </linearGradient>
        </defs>
        <path d="M0 54h94v230L0 246z" fill="url(#wa)" />
        <path d="M0 246l94 38v30L0 286z" fill="#181619" />
        <path d="M0 285l94 30v20L0 305z" fill="#29152f" />
        <path d="M0 305l94 34v166L0 483z" fill="url(#wb)" />
        <path d="M0 484l94 21" stroke="#45174a" strokeWidth="3" />
        <path d="M76 58L70 312" stroke="#321450" strokeWidth="7" opacity=".8" />
        <path d="M86 315v22" stroke="#3d164e" strokeWidth="7" />
        <text x="24" y="428" fontSize="56" fontWeight="600" fontFamily="Open Sans, sans-serif" fill="#4d2556" textLength="69" lengthAdjust="spacingAndGlyphs" transform="rotate(8 24 428)">Tole</text>
        <path d="M0 1138l94-15v317H0z" fill="url(#wc)" />
        <path d="M0 1155l94-17v26L0 1178z" fill="#481132" />
      </svg>
      <div className="relative flex h-full flex-col items-center pt-[8px]">
        {dock.map((d) => (
          <div key={d.k} className="relative mb-[8px] flex h-[80px] w-[94px] shrink-0 items-center justify-center">
            {d.on && <div className="absolute left-[8px] h-[80px] w-[80px] rounded-lg bg-[#424343]" />}
            {d.dot && <div className="absolute left-[8px] size-[7px] rounded-full bg-[#e95420]" />}
            <Svg size={46} className="relative ml-[2px]">{d.el}</Svg>
          </div>
        ))}
        <div className="mb-[29px] ml-[2px] mt-auto grid grid-cols-3 gap-[6px]">
          {[...Array(9)].map((_, k) => <div key={k} className="size-[6px] rounded-[1px] bg-white" />)}
        </div>
      </div>
    </div>
  );
}

/* ---------- ruler ---------- */
function Ruler() {
  const zero = 379, inch = 170.8;
  const marks = [];
  for (let e = -17; e <= 50; e++) {
    const x = zero + (e * inch) / 8;
    if (x < 4 || x > 1450 || e === 0) continue;
    if (e % 8 === 0) {
      marks.push(
        <g key={e}>
          <path d={`M${x} 1v3M${x} 27v3`} stroke="#8e8e8e" strokeWidth="2" />
          <text x={x - 1} y="21" fontSize="17" textAnchor="middle" fill="#8e8e8e" fontFamily="Noto Sans, sans-serif">{Math.abs(e / 8)}</text>
        </g>
      );
    } else {
      const t = e % 4 === 0 ? 6 : 3;
      marks.push(<path key={e} d={`M${x} ${14 - t}v${2 * t}`} stroke="#8e8e8e" strokeWidth="1.800" />);
    }
  }
  return (
    <svg width="1454" height="40" viewBox="0 -3 1454 40" className="mt-[5px] block overflow-visible">
      <rect x="145" y="0" width="1162" height="30" fill="#323232" />
      <path d="M1 1h144v28H1zM1307 1h144v28h-144z" fill="none" stroke="#8e8e8e" strokeWidth="2" />
      {marks}
      {[250, 742, 1116].map((x) => <path key={x} d={`M${x - 1.500} 1v28M${x + 2.500} 1v28`} stroke="#8e8e8e" strokeWidth="1.600" />)}
      {[465, 551, 635, 721].map((x) => <path key={x} d={`M${x} 24v8M${x - 5} 31.500h10`} stroke="#a5a5a5" strokeWidth="2" />)}
      <g fill="#333" stroke="#b0b0b0" strokeWidth="2">
        <path d="M371-1h16v6l-8 9-8-9z" />
        <path d="M371 31h16v-6l-8-9-8 9z" />
        <path d="M735 31h16v-6l-8-9-8 9z" />
      </g>
    </svg>
  );
}

/* ---------- document ---------- */
const rows = [
  { h: 66, c: [[["STT", 48]], [["Yêu cầu", 92]], [["Chức năng", 122]], [["Câu hỏi", 90]], [["Người thực", 131], ["hiện", 50]]] },
  {
    h: 132,
    c: [
      [["1", 14]], [["6.2.1", 56]],
      [["Clicks on ‘Include In-active’", 327], ["checkbox", 109]],
      [["Khi bỏ chọn danh sách có trả", 333], ["về danh sách mặc định không", 339], ["hay vẫn hiển thị danh sách", 303], ["những công ty đã được active", 339]],
      [],
    ],
  },
  { h: 66, c: [[["2", 14]], [], [["Hiển thị danh sách mặc định", 324]], [["Độ dài của các trường là cố", 314], ["định hay có thể mở rộng", 278]], []] },
  { h: 100, c: [[["3", 14]], [], [["Các chức năng lọc theo kí tự", 327], ["đầu của tên ‘all’, ‘abc’,", 265], ["‘efgh’…", 99]], [["Khi muốn xem lại danh sách", 327], ["mặc định thì ấn nút nào", 268]], []] },
  {
    h: 296,
    c: [
      [["4", 14]], [],
      [["Chọn một bản ghi trong danh", 335], ["sách thì hiển thị thông báo", 300], ["“Do you want to make this", 305], ["Organisation active?” chọn", 308], ["OK, thì sẽ thay đổi trạng thái", 330], ["is active của công ty thành", 302], ["yes còn khi chọn cancel thì", 308], ["giữ nguyên danh sách trạng", 314], ["thái", 41]],
      [["Khi muốn thay đổi một công", 329], ["ty đang hoạt động thì có thể", 318], ["làm như chức năng này", 266], ["không?", 84]],
      [],
    ],
  },
  { h: 99, c: [[["5", 14]], [], [["Hiển thị danh sách mặc đặc", 313], ["khi chọn mục", 154]], [["Danh sách sẽ được sắp xếp", 309], ["như thế nào khi hiển thị", 271]], []] },
];
const pads = ["pl-[12px]", "pl-[14px]", "pl-[14px]", "pl-[12px]", "pl-[12px]"];

function DocTable() {
  return (
    <div className="relative ml-[146px] w-[1162px] border-r-2 border-black font-['Liberation_Serif',serif] text-[28.480px] leading-[32.800px] text-black">
      {rows.map((r, k) => (
        <div key={k} className="grid grid-cols-[104px_128px_364px_374px_190px]" style={{ height: r.h }}>
          {r.c.map((cell, j) => (
            <div key={j} className={"border-l-2 border-t-2 border-black " + pads[j]}>
              <div className={k === 0 ? "-mt-[1.500px]" : ""}>
                {cell.map(([t, w]) => <Fit key={t} w={w}>{t}</Fit>)}
              </div>
            </div>
          ))}
        </div>
      ))}
      <div className="absolute left-[232px] top-[-1px] h-[662px] w-[366px] border-2 border-[#e24c1c] bg-[#e04b1c]/25" />
      <div className="absolute left-[-92px] top-[394px] h-[2px] w-[330px] bg-[#aaa]" />
    </div>
  );
}

function PageHeader() {
  return (
    <div className="relative flex h-[161px] pl-[176px]">
      <div className="mt-[44px] h-[100px] w-[294px] border-b border-r-2 border-b-[#e2eaf0] border-r-[#c0c0c0]">
        <Svg w={292} h={98} vb="718 482 292 98">
          <path d="M788 494h16l-5 27q-1 6-6 6h-19l4-24q2-8 10-9z" fill="#0e4da1" />
          <path d="M815 485h16l-8 42q-1 8-9 8h-16l8-42q2-8 9-8z" fill="#f26f26" />
          <path d="M838 494h16l-5 27q-1 6-6 6h-18l4-24q2-8 9-9z" fill="#4eb648" />
          <g fontFamily="Liberation Sans, sans-serif" fontWeight="bold" fontStyle="italic" fontSize="21" fill="#fff">
            <text x="780" y="518" textLength="17" lengthAdjust="spacingAndGlyphs">F</text>
            <text x="804" y="518" textLength="17" lengthAdjust="spacingAndGlyphs">P</text>
            <text x="831" y="518" textLength="17" lengthAdjust="spacingAndGlyphs">T</text>
          </g>
          <circle cx="853" cy="523" r="3" fill="#7288c2" />
          <text x="861" y="518" fontSize="19" fontWeight="600" fontFamily="Open Sans, sans-serif" fill="#3f93c4" textLength="88" lengthAdjust="spacingAndGlyphs">Fpt University</text>
          <text x="721" y="571" fontSize="29.500" fontWeight="bold" fontFamily="DejaVu Serif, serif" fill="#ee7128" stroke="#ee7128" strokeWidth="1.800" textLength="282" lengthAdjust="spacingAndGlyphs">FPT POLYTECHNIC</text>
        </Svg>
      </div>
      <div className="absolute left-[168px] top-[152px] h-[2px] w-[1118px] bg-[#a5a5a5]" />
      <div className="relative ml-[450px] mt-[106px] h-[46px] w-[458px] border-2 border-[#c0c0c0]">
        <div className="absolute -top-[4px] left-0 h-[50px] w-[440px] overflow-hidden font-['DejaVu_Sans',sans-serif] text-[27px] leading-[32px] text-black">
          <Fit w={430}>SOF303 - BÁO CÁO ASSIGNMENT</Fit>
          <Fit w={53}>GD1</Fit>
        </div>
        <svg className="absolute right-[2px] top-[17px]" width="18" height="20" viewBox="0 0 18 20"><path d="M0 0l18 10L0 20z" fill="#f00" /></svg>
      </div>
      <div className="absolute left-[122px] top-[136px] h-[25px] w-[25px] border-b-2 border-r-2 border-[#c0c0c0]" />
      <div className="absolute left-[1307px] top-[136px] h-[25px] w-[25px] border-b-2 border-l-2 border-[#c0c0c0]" />
    </div>
  );
}

function Workspace() {
  return (
    <div className="flex h-[986px]">
      <div className="flex w-[2346px] shrink-0 flex-col">
        <div className="flex h-[48px]">
          <div className="ml-[16px] mt-[18px] h-[12px] w-[14px] border-b-4 border-l-4 border-[#9a9a9a]" />
          <div className="ml-[416px]"><Ruler /></div>
        </div>
        <div className="h-[938px] overflow-hidden pl-[446px]">
          <div className="h-[24px] w-[1454px] bg-white shadow-[0_3px_12px_rgba(255,255,255,0.2)]" />
          <div className="mt-[32px] h-[1400px] w-[1454px] bg-white shadow-[0_2px_12px_rgba(255,255,255,0.16)]">
            <PageHeader />
            <DocTable />
          </div>
        </div>
      </div>
      <div className="w-[24px] bg-[#393939] pl-[6px] pt-[726px]">
        <div className="h-[68px] w-[12px] rounded-full bg-[#ababab]" />
      </div>
      <div className="flex h-full grow border-y-4 border-[#808080]">
        <div className="flex w-[16px] flex-col border-x-4 border-[#808080]">
          <div className="-ml-[4px] mt-[416px] flex h-[146px] w-[14px] shrink-0 items-center justify-center bg-[#9a9a9a]">
            <svg width="10" height="14" viewBox="0 0 10 14"><path d="M0 0l10 7-10 7z" fill="#3d3d3d" /></svg>
          </div>
        </div>
        <div className="flex w-[76px] flex-col items-center pt-[13px]">
          <Svg size={46}><Gear x={24} y={24} r={22} fill="#e6e6e6" /></Svg>
          <div className="mt-[15px] h-[2px] w-[44px] bg-[#303030]" />
          <div className="mt-[6px] flex h-[64px] w-[64px] items-center justify-center rounded-md border-2 border-[#c4c4c4]">
            <Svg size={46}>
              <rect x="5" y="5" width="38" height="38" fill="#e8e8ea" stroke="#fff" />
              <rect x="9" y="17" width="30" height="14" rx="7" fill="#4a9cf0" />
              <circle cx="32" cy="24" r="6.500" fill="#f4f4f4" stroke="#bbb" />
            </Svg>
          </div>
          <Svg size={46} className="mt-[15px]"><rect x="6.500" y="3" width="35" height="42" fill="#e2e2e2" stroke="#f5f5f5" /></Svg>
          <Svg size={46} className="mt-[24px]"><Glyph t="A" x={17} y={32} size={42} fill="#636363" /><Brush dx={1} dy={1} /></Svg>
          <Svg size={46} className="mt-[24px]">
            <path d="M8 4l36 7-4 28-40-7z" fill="#e6eef2" />
            <path d="M10 7l30 6-3 24-34-8z" fill="#2d9dcc" />
            <Pic x={5} y={12} w={40} h={30} />
          </Svg>
          <Svg size={46} className="mt-[23px]">
            <circle cx="24" cy="24" r="20" fill="#4a5468" stroke="#d3d3d3" strokeWidth="4" />
            <path d="M24 16l2 6 6 2-6 3-2 6-3-6-6-3 6-2z" fill="#d8d8d8" />
            <path d="M24 24L18 38l8-12zM24 24l10 8-8-10z" fill="#ededed" />
            <path d="M7 18l17 3 7-14-3 14 13 8-16-5z" fill="#d9393b" />
          </Svg>
        </div>
      </div>
    </div>
  );
}

const menu = [
  ["File", 48, 79.5], ["Edit", 53, 86.5], ["View", 66, 96.5], ["Insert", 77, 110.5], ["Format", 99, 131], ["Styles", 79, 114],
  ["Table", 73, 106], ["Form", 70, 104], ["Tools", 71, 104], ["Window", 108, 140], ["Help", 60, 60],
];

const StatusCell = ({ w, pl = 0, last, children }) => (
  <div className={"flex h-[28px] shrink-0 items-center " + (last ? "" : "border-r-2 border-[#353535]")} style={{ width: w, paddingLeft: pl }}>
    {children}
  </div>
);
const Stat = ({ w, children }) => <Fit w={w} className="pt-[2px]">{children}</Fit>;
const WhiteTri = ({ w = 20 }) => (
  <svg width={w} height="10" viewBox="0 0 20 10" className="block shrink-0"><path d="M0 0h20L10 10z" fill="#f2f2f2" /></svg>
);

export default function App() {
  return (
    <div className="flex h-[1440px] w-[2560px] flex-col overflow-hidden bg-[#3d3d3d] font-['Noto_Sans',sans-serif] text-[28px] leading-none text-[#f5f5f5]">
      {/* system bar */}
      <div className="flex h-[54px] shrink-0 items-center bg-[#1d1d1d] leading-[54px]">
        <Fit w={122} className="ml-[24px]">Activities</Fit>
        <Svg w={24} h={30} vb="0 0 24 30" className="ml-[72px]">
          <rect x="0" y="0" width="24" height="30" rx="3" fill="#6a6a6a" />
          <path d="M3 3h12l6 6v18H3z" fill="#f3f3f3" />
          <path d="M5 10h10M5 14h14M5 18h14M5 22h11" stroke="#333" strokeWidth="2" />
        </Svg>
        <Fit w={240} className="ml-[16px]">LibreOffice Writer</Fit>
        <div className="ml-[9px]"><WhiteTri /></div>
        <Fit w={206} className="ml-[698px]">{"Thg 3 25  16:29"}</Fit>
        <Fit w={22} className="ml-[794px]">vi</Fit>
        <div className="ml-[15px]"><WhiteTri /></div>
        <Svg w={30} h={26} vb="0 0 30 26" className="ml-[65px]">
          <path d="M1 8Q15-6 29 8" fill="none" stroke="#f2f2f2" strokeWidth="2.400" />
          <path d="M2 9Q15-2 28 9L15 26z" fill="#f2f2f2" />
          <path d="M3 9Q15-1 27 9" fill="none" stroke="#1d1d1d" strokeWidth="1.600" transform="translate(0 1.500)" />
        </Svg>
        <Svg w={30} h={28} vb="0 0 30 28" className="ml-[26px]">
          <path d="M0 8h6l8-8v28l-8-8H0z" fill="#f2f2f2" />
          <path d="M18 8q5 6 0 12" fill="none" stroke="#f2f2f2" strokeWidth="2.400" />
          <path d="M23 4q8 10 0 20" fill="none" stroke="#8a8a8a" strokeWidth="2.200" />
        </Svg>
        <Svg w={20} h={30} vb="0 0 20 30" className="ml-[31px]">
          <path d="M6 0h8v3H6z" fill="#f2f2f2" />
          <rect x="1" y="3" width="18" height="26" rx="2" fill="none" stroke="#f2f2f2" strokeWidth="2" />
          <rect x="4" y="20" width="12" height="6" fill="#f2f2f2" />
        </Svg>
        <div className="ml-[27px]"><WhiteTri /></div>
      </div>

      <div className="flex h-[1386px]">
        <Dock />
        <div className="flex w-[2464px] shrink-0 flex-col">
          {/* title bar */}
          <div className="flex h-[74px] shrink-0 items-center border-b-2 border-t-2 border-b-[#222] border-t-[#3a3a3a] bg-[#2c2c2c]">
            <Fit w={416} className="ml-[1023px] font-bold">asm.docx - LibreOffice Writer</Fit>
            <div className="ml-[845px] mt-[8px] h-[2px] w-[16px] bg-white" />
            <Svg w={16} h={16} vb="0 0 16 16" className="ml-[52px]">
              <path d="M4 1h11v11" fill="none" stroke="#8f8f8f" strokeWidth="2" />
              <rect x="1" y="5" width="10" height="10" fill="none" stroke="#fff" strokeWidth="2" />
            </Svg>
            <Svg size={38} vb="0 0 38 38" className="ml-[41px]">
              <circle cx="19" cy="19" r="18.500" fill="#e04c1a" />
              <path d="M12 12l14 14M26 12L12 26" stroke="#fff" strokeWidth="2.400" />
            </Svg>
          </div>
          {/* menu bar */}
          <div className="flex h-[50px] shrink-0 items-center pl-[16px]">
            <div className="flex h-full w-[2376px] items-center border-b-2 border-[#363636]">
              {menu.map(([t, w, cell]) => (
                <div key={t} className="pt-[1px]" style={{ width: cell }}><Fit w={w}>{t}</Fit></div>
              ))}
            </div>
            <Svg size={16} vb="0 0 16 16" className="ml-[28px]"><path d="M1 1l14 14M15 1L1 15" stroke="#fff" strokeWidth="2.400" /></Svg>
          </div>
          <div className="relative flex h-[76px] shrink-0 items-center">
            <Grip />
            <Bar items="newdoc+ open+ save+ | pdf print preview | cut copy paste+ | clone | undo+ redo- | find spell pilcrow | table+ image chart textbox | pagebreak field+ omega+ | link footnote endnote bookmark crossref | comment track | line" />
            <More />
          </div>
          <div className="relative flex h-[80px] shrink-0 items-center">
            <Grip />
            <Combo text="Text Body" tw={138} w={286} left={19} />
            <div className="w-[2px] shrink-0" />
            <Bar items="updStyle newStyle |" />
            <Combo text="Times New Ro" tw={184} w={287} left={22} italic clip={178} />
            <div className="w-[15px] shrink-0" />
            <Combo text="12" tw={32} w={170} left={20} />
            <div className="w-px shrink-0" />
            <Bar items="| bold italic underline strike | sup sub | clear | fontColor+ highlight+ | *alL alC alR alJ | bullets+ numbers+ | indent outdent | lineSp+ paraSp" />
            <More />
          </div>
          <Workspace />
          {/* table toolbar */}
          <div className="flex h-[78px] shrink-0 items-center pb-[2px]">
            <Grip />
            <Bar items="rowAbove rowBelow colBefore colAfter | delRow delCol delTab | selCell selTab | merge split splitTab | autofit+ | *vTop vMid vBot | cellBg+ tabStyle | borders+ bStyle+ bColor+ | currency percent decimal numfmt | caption sort | lock unlock | sum fx | props" />
          </div>
          {/* status bar */}
          <div className="flex h-[42px] shrink-0 items-center border-t-2 border-[#808080] text-[24px]">
            <StatusCell w={202} pl={20}><Stat w={124}>Page 7 of 8</Stat></StatusCell>
            <StatusCell w={474} pl={16}><Stat w={385}>Selected: 72 words, 363 characters</Stat></StatusCell>
            <StatusCell w={232} pl={16}><Stat w={129}>Converted1</Stat></StatusCell>
            <StatusCell w={232} pl={46}><Stat w={144}>English (USA)</Stat></StatusCell>
            <StatusCell w={136} />
            <StatusCell w={58} pl={13}>
              <Svg w={32} h={20} vb="0 0 32 20" className="mt-[2px]"><path d="M0 1h10M5 1v18M0 19h10M18 13v4h12v-4" fill="none" stroke="#8a8a8a" strokeWidth="2" /></Svg>
            </StatusCell>
            <StatusCell w={58} pl={16}>
              <Svg w={25} h={18} vb="0 0 25 18"><rect width="25" height="18" fill="#eaeaea" /><path d="M9 1h7v7h5l-8 9-9-9h5z" fill="#e8801f" stroke="#b85a10" /></Svg>
            </StatusCell>
            <StatusCell w={58} />
            <StatusCell w={494} pl={178}><Stat w={139}>Table3:C1:C5</Stat></StatusCell>
            <StatusCell w={152} pl={24}>
              <Svg w={108} h={20} vb="0 0 108 20" className="mt-[2px]">
                <path d="M1 1h10l4 6v12H1z" fill="none" stroke="#c15b10" strokeWidth="2" />
                <g fill="none" stroke="#868686" strokeWidth="2">
                  <path d="M29 1h9l5 6v12H29zM49 1h9l5 6v12H49zM91 1v18H77V7l6-6zM91 1h9l6 6v12H91" />
                </g>
              </Svg>
            </StatusCell>
            <StatusCell w={286} pl={18}>
              <Svg w={252} h={24} vb="0 0 252 24" className="mt-[2px]">
                <path d="M1 13h17M234 13h18M243 4v18" stroke="#868686" strokeWidth="2" />
                <path d="M31 12h194" stroke="#9a9a9a" strokeWidth="3" />
                <path d="M56 6v11M125.500 6v11" stroke="#9a9a9a" strokeWidth="3" />
                <circle cx="112" cy="12" r="9" fill="#f0f0f0" />
              </Svg>
            </StatusCell>
            <StatusCell w={80} pl={14} last><Stat w={49}>89%</Stat></StatusCell>
          </div>
        </div>
      </div>
    </div>
  );
}
